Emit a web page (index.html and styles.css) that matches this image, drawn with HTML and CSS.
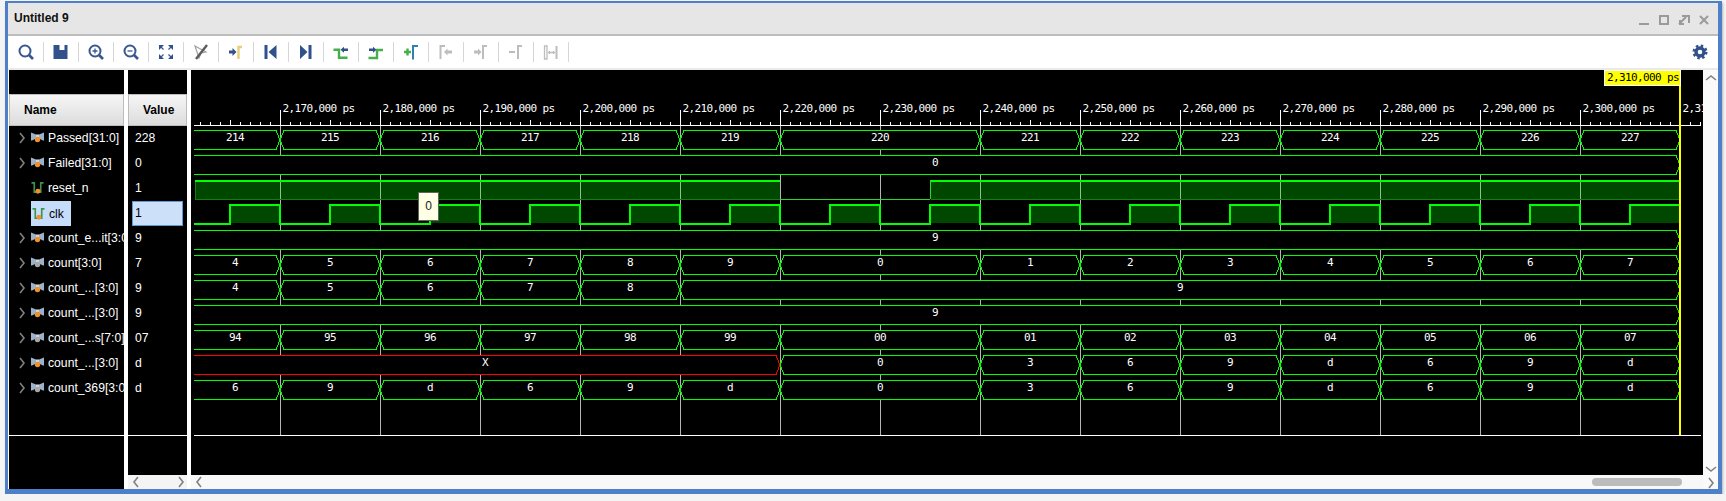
FILE: index.html
```html
<!DOCTYPE html>
<html lang="en">

<head>
  <meta charset="UTF-8">
  <title>Untitled 9</title>
  <link rel="stylesheet" href="styles.css">
</head>

<body>
  <svg class="defs" width="0" height="0">
    <symbol id="bus" viewBox="0 0 13 11">
      <path class="wing" d="M0 0L5 2V6L1 8H0Z" />
      <path class="wing" d="M13 0L8 2V6L12 8H13Z" />
      <path class="wing-mid" d="M5 2H8V5H5Z" />
      <circle class="dot" cx="6.5" cy="7" r="2.7" />
    </symbol>
    <symbol id="bit" viewBox="0 0 13 13">
      <path class="bit-line" d="M0 1H3V11H10V1H13" />
      <circle class="dot orange" cx="7" cy="10" r="2.7" />
    </symbol>
    <symbol id="chev-r" viewBox="0 0 8 12">
      <path class="chev" d="M2 1L6 6L2 11" />
    </symbol>
  </svg>

  <div class="window">
    <div class="titlebar">
      <span class="title">Untitled 9</span>
      <div class="win-buttons">
        <svg width="12" height="12" viewBox="0 0 12 12"><path class="win-icon" d="M1 11H11" /></svg>
        <svg width="12" height="12" viewBox="0 0 12 12"><path class="win-icon" d="M2 3H10V11H2Z" /></svg>
        <svg width="12" height="12" viewBox="0 0 12 12"><path class="win-icon" d="M4 3H11V10M1 11L8 4M2 7V11H6" /></svg>
        <svg width="12" height="12" viewBox="0 0 12 12"><path class="win-icon" d="M2 3L10 11M10 3L2 11" /></svg>
      </div>
    </div>

    <div class="toolbar">
      <div class="tool"><svg viewBox="0 0 20 20"><circle class="s-navy" cx="9" cy="9" r="5.5" /><path class="s-navy thick" d="M13 13L17 17" /></svg></div>
      <div class="tool"><svg viewBox="0 0 20 20"><path class="navy" d="M2.5 3H8.5V8H13.5V3H16.5V17H2.5Z" /></svg></div>
      <div class="tool"><svg viewBox="0 0 20 20"><circle class="s-navy" cx="9" cy="9" r="5.5" /><path class="s-navy thick" d="M13 13L17 17" /><path class="s-navy thin" d="M6.5 9H11.5M9 6.5V11.5" /></svg></div>
      <div class="tool"><svg viewBox="0 0 20 20"><circle class="s-navy" cx="9" cy="9" r="5.5" /><path class="s-navy thick" d="M13 13L17 17" /><path class="s-navy thin" d="M6.5 9H11.5" /></svg></div>
      <div class="tool"><svg viewBox="0 0 20 20"><path class="navy" d="M3 3H8L3 8ZM17 3V8L12 3ZM3 17V12L8 17ZM17 17H12L17 12Z" /><path class="s-navy thin" d="M5 5L7.5 7.5M15 5L12.5 7.5M5 15L7.5 12.5M15 15L12.5 12.5" /></svg></div>
      <div class="tool"><svg viewBox="0 0 20 20"><path class="s-faded" d="M4 4L15 10L10 11L8 16Z" /><path class="s-slash" d="M16 3L5 17" /></svg></div>
      <div class="tool"><svg viewBox="0 0 20 20"><path class="navy" d="M3 8.5H6.5V6L10.5 10L6.5 14V11.5H3Z" /><path class="s-yellow" d="M12.5 17V5H16" /></svg></div>
      <div class="tool"><svg viewBox="0 0 20 20"><path class="navy" d="M3.5 3H6.5V17H3.5ZM15.5 3V17L7.5 10Z" /></svg></div>
      <div class="tool"><svg viewBox="0 0 20 20"><path class="navy" d="M4 3V17L11.5 10ZM12.5 3H15.5V17H12.5Z" /></svg></div>
      <div class="tool"><svg viewBox="0 0 20 20"><path class="s-green" d="M2.5 7.7H8V15.7H16.5" /><path class="navy" d="M9.5 7.7L13 4.7V6.5H17V9H13V10.7Z" /></svg></div>
      <div class="tool"><svg viewBox="0 0 20 20"><path class="s-green" d="M2.5 16H11V8H17" /><path class="navy" d="M3 6.5H7V4.7L10.5 7.7L7 10.7V9H3Z" /></svg></div>
      <div class="tool"><svg viewBox="0 0 20 20"><path class="s-green" d="M3 10H10M6.5 6.5V13.5" /><path class="s-blue" d="M12 17.5V4H17" /></svg></div>
      <div class="tool"><svg viewBox="0 0 20 20"><path class="s-gray" d="M4.5 17V4H9" /><path class="gray" d="M8 10L11.5 6.5V8.5H16V11.5H11.5V13.5Z" /></svg></div>
      <div class="tool"><svg viewBox="0 0 20 20"><path class="gray" d="M3 8.5H7V6.5L10.5 10L7 13.5V11.5H3Z" /><path class="s-gray" d="M12 17V4H16" /></svg></div>
      <div class="tool"><svg viewBox="0 0 20 20"><path class="s-gray" d="M3 10H9M12 17V4H16" /></svg></div>
      <div class="tool"><svg viewBox="0 0 20 20"><path class="s-gray thin" d="M3.5 4H6V17H3.5Z" /><path class="s-gray thin" d="M7 10.5H14M8.5 9V12M12.5 9V12" /><path class="s-gray" d="M15.5 4V17" /></svg></div>
      <svg class="gear" viewBox="0 0 16 16"><circle class="gear-ring" cx="8" cy="8" r="4" /><circle class="gear-teeth" cx="8" cy="8" r="6.3" /></svg>
    </div>

    <div class="panes">
      <div class="names">
        <div class="col-top"></div>
        <div class="col-head name-head">Name</div>
        <div class="rows">
          <div class="row"><svg class="tree"><use href="#chev-r" /></svg><svg class="ico orange"><use href="#bus" /></svg><span class="label">Passed[31:0]</span></div>
          <div class="row"><svg class="tree"><use href="#chev-r" /></svg><svg class="ico orange"><use href="#bus" /></svg><span class="label">Failed[31:0]</span></div>
          <div class="row leaf"><svg class="ico"><use href="#bit" /></svg><span class="label">reset_n</span></div>
          <div class="row leaf"><span class="selected"><svg class="ico"><use href="#bit" /></svg><span class="label">clk</span></span></div>
          <div class="row"><svg class="tree"><use href="#chev-r" /></svg><svg class="ico orange"><use href="#bus" /></svg><span class="label">count_e...it[3:0]</span></div>
          <div class="row"><svg class="tree"><use href="#chev-r" /></svg><svg class="ico"><use href="#bus" /></svg><span class="label">count[3:0]</span></div>
          <div class="row"><svg class="tree"><use href="#chev-r" /></svg><svg class="ico orange"><use href="#bus" /></svg><span class="label">count_...[3:0]</span></div>
          <div class="row"><svg class="tree"><use href="#chev-r" /></svg><svg class="ico orange"><use href="#bus" /></svg><span class="label">count_...[3:0]</span></div>
          <div class="row"><svg class="tree"><use href="#chev-r" /></svg><svg class="ico"><use href="#bus" /></svg><span class="label">count_...s[7:0]</span></div>
          <div class="row"><svg class="tree"><use href="#chev-r" /></svg><svg class="ico orange"><use href="#bus" /></svg><span class="label">count_...[3:0]</span></div>
          <div class="row"><svg class="tree"><use href="#chev-r" /></svg><svg class="ico"><use href="#bus" /></svg><span class="label">count_369[3:0]</span></div>
        </div>
      </div>

      <div class="values">
        <div class="col-top"></div>
        <div class="col-head value-head">Value</div>
        <div class="rows">
          <div class="row val">228</div>
          <div class="row val">0</div>
          <div class="row val">1</div>
          <div class="row val val-selected">1</div>
          <div class="row val">9</div>
          <div class="row val">7</div>
          <div class="row val">9</div>
          <div class="row val">9</div>
          <div class="row val">07</div>
          <div class="row val">d</div>
          <div class="row val">d</div>
        </div>
        <div class="col-rest"></div>
        <div class="hscroll short">
          <svg class="flip"><use href="#chev-r" /></svg>
          <svg><use href="#chev-r" /></svg>
        </div>
      </div>

      <div class="wave-col">
        <svg id="wave" viewBox="191 70 1512 405" width="1512" height="405"></svg>
        <div class="tip">0</div>
        <div class="hscroll">
          <svg class="flip"><use href="#chev-r" /></svg>
          <div class="thumb"></div>
        </div>
      </div>

      <div class="vscroll">
        <svg class="up"><use href="#chev-r" /></svg>
        <svg class="down"><use href="#chev-r" /></svg>
        <svg class="corner"><use href="#chev-r" /></svg>
      </div>
    </div>
  </div>

  <script src="wave.js"></script>
</body>

</html>
```

FILE: styles.css
```css
body {
  margin: 0;
  background-color: #f4f4f4;
  font-family: "Liberation Sans", Arial, sans-serif;
  font-size: 12px;
}

.defs {
  position: absolute;
}

.window {
  box-sizing: border-box;
  width: 1717px;
  height: 493px;
  margin: 1px 0 0 5px;
  border: solid #4d80c9;
  border-width: 2px 4px 5px 3px;
  box-shadow: 1px 2px 2px #b5b5b5;
  background-color: #fff;
  display: flex;
  flex-direction: column;
}

.titlebar {
  height: 33px;
  box-sizing: border-box;
  background-color: #e6e6e6;
  border-bottom: 2px solid #bdbdbd;
  display: flex;
  align-items: center;
  justify-content: space-between;
  padding: 0 8px 0 6px;
}

.title {
  font-weight: bold;
  color: #111;
  margin-top: -1px;
}

.win-buttons {
  display: flex;
  gap: 8px;
  margin-top: 1px;
}

.win-icon {
  fill: none;
  stroke: #9a9a9a;
  stroke-width: 2;
}

.toolbar {
  height: 32px;
  background-color: #fff;
  border-bottom: 2px solid #eaeaea;
  box-sizing: content-box;
  display: flex;
  align-items: center;
  padding: 0 10px 0 1px;
}

.tool {
  width: 35px;
  height: 20px;
  box-sizing: border-box;
  border-right: 1px solid #d6d6d6;
  display: flex;
  align-items: center;
  justify-content: center;
}

.tool svg {
  width: 20px;
  height: 20px;
}

.tool path,
.tool circle {
  fill: none;
}

.tool .navy { fill: #31518b; }
.tool .gray { fill: #bdbdbd; }

.tool .s-navy { stroke: #38588f; stroke-width: 2; }
.tool .thick { stroke-width: 2.6; }
.tool .thin { stroke-width: 1.3; }
.tool .s-green { stroke: #45b04a; stroke-width: 2.4; }
.tool .s-blue { stroke: #2f80b5; stroke-width: 2; }
.tool .s-yellow { stroke: #e5cf78; stroke-width: 2.4; }
.tool .s-gray { stroke: #bdbdbd; stroke-width: 2; }
.tool .s-gray.thin { stroke-width: 1.3; }
.tool .s-faded { stroke: #a0a0a0; stroke-width: 1.2; }
.tool .s-slash { stroke: #5c5c5c; stroke-width: 2.4; }

.gear {
  width: 16px;
  height: 16px;
  margin-left: auto;
}

.gear-ring {
  fill: none;
  stroke: #31518b;
  stroke-width: 3.4;
}

.gear-teeth {
  fill: none;
  stroke: #31518b;
  stroke-width: 2.4;
  stroke-dasharray: 2.47 2.48;
}

.panes {
  flex: 1;
  min-height: 0;
  display: flex;
  background-color: #fff;
}

.names,
.values {
  background-color: #000;
  color: #fff;
  display: flex;
  flex-direction: column;
  overflow: hidden;
}

.names {
  width: 115px;
  margin-left: 1px;
  margin-right: 4px;
}

.values {
  width: 59px;
  margin-right: 4px;
}

.col-top {
  height: 24px;
  flex: none;
}

.col-head {
  height: 32px;
  flex: none;
  box-sizing: border-box;
  background: linear-gradient(#f6f6f6, #dcdcdc);
  border: 1px solid #bcbcbc;
  color: #000;
  font-weight: bold;
  line-height: 30px;
}

.name-head {
  padding-left: 14px;
}

.value-head {
  padding-left: 14px;
}

.rows {
  height: 310px;
  flex: none;
  box-sizing: border-box;
  border-bottom: 1px solid #fff;
  font-size: 12.2px;
}

.row {
  height: 25px;
  display: flex;
  align-items: center;
  white-space: nowrap;
  padding-bottom: 2px;
  box-sizing: border-box;
}

.leaf {
  padding-left: 22px;
}

.tree {
  width: 8px;
  height: 12px;
  margin-left: 9px;
  margin-right: 5px;
  flex: none;
}

.chev {
  fill: none;
  stroke: #808080;
  stroke-width: 1.6;
}

.ico {
  width: 13px;
  height: 12px;
  margin-right: 4px;
  flex: none;
  color: #a8a8a8;
}

.ico.orange {
  color: #f0902a;
}

.wing { fill: #9db2c9; }
.wing-mid { fill: #d4d8dc; }
.dot { fill: currentColor; }
.dot.orange { fill: #f0902a; }

.bit-line {
  fill: none;
  stroke: #3d9448;
  stroke-width: 1.8;
}

.selected {
  display: flex;
  align-items: center;
  height: 25px;
  width: 40px;
  box-sizing: border-box;
  padding-left: 1px;
  margin-bottom: -2px;
  background-color: #c6dcfb;
  color: #000;
}

.val {
  padding-left: 7px;
}

.val-selected {
  margin: 0 4px;
  padding-left: 2px;
  background-color: #cde0fa;
  border: 1px solid #5f9bd0;
  color: #000;
}

.col-rest {
  flex: 1;
}

.wave-col {
  width: 1512px;
  position: relative;
  display: flex;
  flex-direction: column;
}

#wave {
  display: block;
  background-color: #000;
  flex: none;
}

.ruler-text,
.bus-text {
  font-family: "DejaVu Sans Mono", "Liberation Mono", monospace;
  font-size: 11px;
  letter-spacing: -0.62px;
  fill: #fff;
}

.bus-text {
  text-anchor: middle;
}

.cursor-text {
  fill: #000;
}

.tip {
  position: absolute;
  left: 227px;
  top: 122px;
  width: 21px;
  height: 29px;
  box-sizing: border-box;
  background-color: #ffffe6;
  border: 1px solid #5c665c;
  color: #222;
  text-align: center;
  line-height: 26px;
}

.hscroll {
  flex: 1;
  background-color: #f8f8f8;
  display: flex;
  align-items: center;
  justify-content: space-between;
  position: relative;
}

.hscroll svg {
  width: 8px;
  height: 12px;
  margin: 0 2px 0 4px;
}

.hscroll .flip {
  transform: scaleX(-1);
}

.hscroll.short {
  flex: none;
  height: 14px;
  background-color: #f4f4f4;
}

.thumb {
  position: absolute;
  left: 1401px;
  width: 90px;
  height: 8px;
  border-radius: 4px;
  background-color: #bcbcbc;
}

.vscroll {
  flex: 1;
  background-color: #fafafa;
  display: flex;
  flex-direction: column;
  align-items: center;
  padding-left: 1px;
}

.vscroll svg {
  width: 8px;
  height: 12px;
  flex: none;
}

.vscroll .up {
  transform: rotate(-90deg);
  margin-top: 2px;
}

.vscroll .down {
  transform: rotate(90deg);
  margin-top: auto;
}

.vscroll .corner {
  margin-top: 2px;
  margin-bottom: 0;
}
```

FILE: wave.js
```js
// waveform drawn in page coordinates, the viewBox starts at the pane corner
const START = 194, CURSOR = 1680, AXIS = 125, FLOOR = 435;
const GREEN = "#00ff00", RED = "#ff0000";

// ends of the 14 stable values most buses share
const EDGES = [280, 380, 480, 580, 680, 780, 980, 1080, 1180, 1280, 1380, 1480, 1580, 1680];

function numbered(labels) {
  return labels.map((label, i) => [label, EDGES[i]]);
}

const rows = [
  numbered(["214", "215", "216", "217", "218", "219", "220", "221", "222", "223", "224", "225", "226", "227"]),
  [["0", CURSOR]],
  null, // reset_n
  null, // clk
  [["9", CURSOR]],
  numbered(["4", "5", "6", "7", "8", "9", "0", "1", "2", "3", "4", "5", "6", "7"]),
  [["4", 280], ["5", 380], ["6", 480], ["7", 580], ["8", 680], ["9", CURSOR]],
  [["9", CURSOR]],
  numbered(["94", "95", "96", "97", "98", "99", "00", "01", "02", "03", "04", "05", "06", "07"]),
  [["X", 780], ["0", 980], ["3", 1080], ["6", 1180], ["9", 1280], ["d", 1380], ["6", 1480], ["9", 1580], ["d", 1680]],
  numbered(["6", "9", "d", "6", "9", "d", "0", "3", "6", "9", "d", "6", "9", "d"]),
];

function line(d, color, width) {
  return `<path d="${d}" fill="none" stroke="${color}" stroke-width="${width || 1}" shape-rendering="crispEdges"/>`;
}

function ruler() {
  let out = line(`M${START} ${AXIS + 0.5}H1701`, "#fff");
  for (let x = 200; x <= 1700; x += 10) {
    const major = (x - 280) % 100 === 0;
    const mid = (x - 280) % 50 === 0;
    const from = major ? 110 : mid ? 120 : 122;
    out += line(`M${x + 0.5} ${from}V${AXIS}`, "#fff");
    if (major) {
      const stamp = (2170 + (x - 280) / 10).toLocaleString("en-US");
      out += `<text class="ruler-text" x="${x + 2.5}" y="112">${stamp},000 ps</text>`;
      out += line(`M${x + 0.5} ${AXIS + 1}V${FLOOR}`, "#b4b4b4");
    }
  }
  return out;
}

function bus(segments, top) {
  const hi = top + 0.5, lo = top + 19.5, mid = top + 10;
  let from = 190, out = "";
  segments.forEach(([label, to]) => {
    const open = from === 190;
    const left = open ? `M${START} ${lo}` : `M${from} ${mid}L${from + 4} ${lo}`;
    const start = open ? `${START}` : `${from + 4}`;
    const d = `${left}H${to - 4}L${to} ${mid}L${to - 4} ${hi}H${start}${open ? "" : `L${from} ${mid}`}`;
    const color = label === "X" ? RED : GREEN;
    out += `<path d="${d}" fill="#000" stroke="${color}" shape-rendering="crispEdges"/>`;
    out += `<text class="bus-text" x="${(from + to) / 2}" y="${top + 11}">${label}</text>`;
    from = to;
  });
  return out;
}

function resetRow(top) {
  const fill = "rgba(0,255,0,0.28)";
  let out = `<rect x="195" y="${top + 1}" width="585" height="18" fill="${fill}"/>`;
  out += `<rect x="930" y="${top + 1}" width="750" height="18" fill="${fill}"/>`;
  out += line(`M195 ${top + 19.5}H780M930.5 ${top + 19.5}H1680M195.5 ${top}V${top + 19}`, "#0d800d");
  out += line(`M195 ${top + 1}H780M930 ${top + 1}H1680`, GREEN, 2);
  out += line(`M780 ${top + 19.5}H930M930.5 ${top}V${top + 19}`, "#22dd22");
  return out;
}

function clkRow(top) {
  let d = `M${START} ${top + 19}H230`, out = "";
  for (let x = 230; x < CURSOR; x += 100) {
    out += `<rect x="${x}" y="${top + 1}" width="50" height="17" fill="rgba(0,255,0,0.28)"/>`;
    d += `V${top}H${x + 50}V${top + 19}H${Math.min(x + 100, CURSOR)}`;
  }
  return out + line(d, GREEN, 2);
}

function cursor() {
  let out = `<rect x="1679" y="85" width="2" height="${FLOOR - 85}" fill="#ffff00"/>`;
  out += `<rect x="1604.5" y="70.5" width="76" height="15" fill="#ffff00" stroke="#fff"/>`;
  out += `<text class="ruler-text cursor-text" x="1607" y="81">2,310,000 ps</text>`;
  return out;
}

let svg = ruler();
rows.forEach((segments, i) => {
  const top = 130 + i * 25;
  if (segments) svg += bus(segments, top);
  else if (i === 2) svg += resetRow(top);
  else svg += clkRow(top);
});
svg += line(`M${START} ${FLOOR + 0.5}H1701`, "#fff");
svg += cursor();

document.getElementById("wave").innerHTML = svg;
```
